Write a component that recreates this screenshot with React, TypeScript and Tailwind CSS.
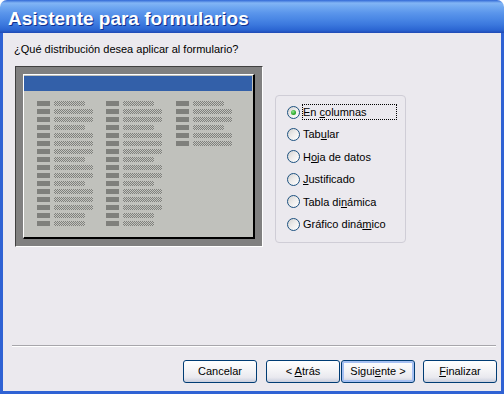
import React from "react";

const LONG = [0, 1, 1, 0, 1, 1, 1, 0, 1, 1, 0, 1, 1, 1, 0, 0];

function Field({ long }: { long: number }) {
  return (
    <div className="flex h-[8px] gap-[4px]">
      <div className="w-[13px] h-[5px] bg-[#7f807c]" />
      <div
        className={
          (long ? "w-[39px] " : "w-[31px] ") +
          "h-[5px] bg-[repeating-conic-gradient(#7f807c_0_25%,#c3c4bf_0_50%)] bg-[length:2px_2px]"
        }
      />
    </div>
  );
}

function Col({ count, className }: { count: number; className: string }) {
  return (
    <div className={"flex flex-col " + className}>
      {LONG.slice(0, count).map((l, i) => (
        <Field key={i} long={l} />
      ))}
    </div>
  );
}

function Radio({ checked }: { checked?: boolean }) {
  return (
    <div className="w-[13px] h-[13px] rounded-full border border-[#1c5180] bg-[linear-gradient(135deg,#d4d2d0_0%,#ecebea_45%,#ffffff_100%)] flex items-center justify-center shrink-0">
      {checked && (
        <div className="w-[5px] h-[5px] rounded-full bg-[radial-gradient(circle_at_40%_35%,#8ee68e_0%,#2aa82a_60%,#178a17_100%)]" />
      )}
    </div>
  );
}

function Opt({
  pre,
  u,
  post,
  checked,
  focus,
}: {
  pre: string;
  u: string;
  post: string;
  checked?: boolean;
  focus?: boolean;
}) {
  return (
    <div className="flex items-center h-[22.4px]">
      <Radio checked={checked} />
      <div
        className={
          "ml-[2px] w-[95px] h-[16px] flex items-center border border-dotted " +
          (focus ? "border-black" : "border-transparent")
        }
      >
        <span className="whitespace-nowrap">
          {pre}
          <u>{u}</u>
          {post}
        </span>
      </div>
    </div>
  );
}

function Btn({
  children,
  def,
  className = "",
}: {
  children: React.ReactNode;
  def?: boolean;
  className?: string;
}) {
  return (
    <button
      className={
        "w-[74px] h-[23px] rounded-[3px] border border-[#003c74] bg-[linear-gradient(to_bottom,#ffffff_0%,#f5f5f7_40%,#e9e9ef_78%,#c9cedd_100%)] text-[11px] leading-[13px] text-black flex items-center justify-center " +
        (def ? "shadow-[inset_0_0_0_2px_#a6c0f2] " : "") +
        className
      }
    >
      <span className="whitespace-pre">{children}</span>
    </button>
  );
}

export default function App() {
  return (
    <div className="w-[504px] h-[394px] flex flex-col bg-white font-['Liberation_Sans',Arial,sans-serif] text-[11px] text-black">
      <div className="h-[33px] shrink-0 rounded-t-[7px] bg-[linear-gradient(to_bottom,#3168d5_0px,#82b5f5_3px,#70a8f1_7px,#5a95eb_13px,#4a87e5_19px,#3a77dd_25px,#2b65d2_30px,#1f49b4_33px)] pl-[8px] pt-[9px]">
        <div className="text-[19px] leading-[19px] font-bold text-white [text-shadow:1px_1px_0_#10308f]">
          Asistente para formularios
        </div>
      </div>
      <div className="flex-1 flex flex-col bg-[#ebe9ee] border-l-[3px] border-r-[3px] border-b-[3px] border-[#2f62d4]">
        <div className="pl-[11px] pt-[10px] leading-[13px]">
          ¿Qué distribución desea aplicar al formulario?
        </div>
        <div className="flex items-start pl-[12px] mt-[10px] gap-[12px]">
          <div className="w-[248px] h-[181px] border-t border-l border-t-[#404040] border-l-[#404040] border-b border-r border-b-white border-r-white bg-[#808080] p-[7px]">
            <div className="w-full h-full border-t border-l border-white border-b-2 border-r-2 border-b-black border-r-black bg-[#c0c1bc] flex flex-col">
              <div className="mt-[1px] mr-[1px] h-[15px] bg-[#3360a9]" />
              <div className="flex mt-[10px] pl-[13px]">
                <Col count={16} className="w-[69px]" />
                <Col count={16} className="w-[70px]" />
                <Col count={6} className="" />
              </div>
            </div>
          </div>
          <div className="mt-[29px] w-[131px] h-[148px] rounded-[4px] border border-[#cfcdd6] pl-[11px] pt-[5px] flex flex-col">
            <Opt pre="En " u="c" post="olumnas" checked focus />
            <Opt pre="Tab" u="u" post="lar" />
            <Opt pre="H" u="o" post="ja de datos" />
            <Opt pre="" u="J" post="ustificado" />
            <Opt pre="Tabla di" u="n" post="ámica" />
            <Opt pre="Gráfico diná" u="m" post="ico" />
          </div>
        </div>
        <div className="flex-1" />
        <div className="ml-[9px] mr-[5px] h-[2px] border-t border-[#a7a6ab] border-b border-b-white" />
        <div className="flex justify-end pr-[4px] mt-[13px] mb-[8px]">
          <Btn>Cancelar</Btn>
          <Btn className="ml-[9px]">
            {"< "}
            <u>A</u>
            {"trás"}
          </Btn>
          <Btn def className="ml-[1px]">
            {"Sigui"}
            <u>e</u>
            {"nte >"}
          </Btn>
          <Btn className="ml-[8px]">
            <u>F</u>
            {"inalizar"}
          </Btn>
        </div>
      </div>
    </div>
  );
}
